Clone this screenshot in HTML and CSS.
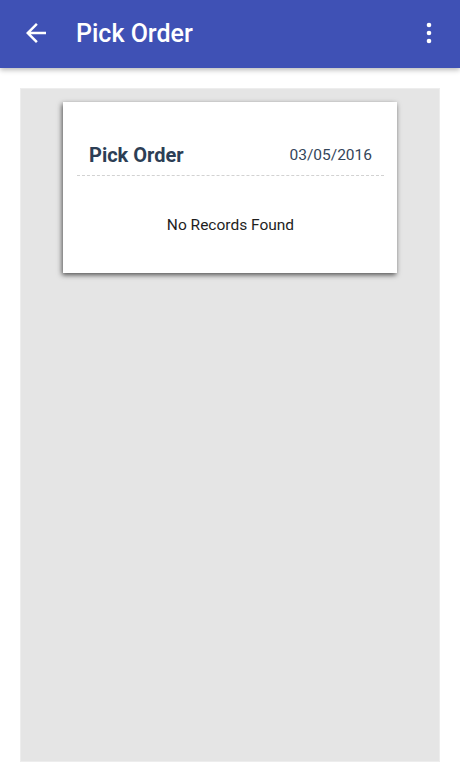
FILE: index.html
```html
<!DOCTYPE html>
<html lang="en">
<head>
<meta charset="utf-8">
<title>Pick Order</title>
<link rel="stylesheet" href="styles.css">
</head>
<body>
<header class="appbar">
  <button class="icon-btn back" aria-label="Back">
    <svg width="30" height="30" viewBox="0 0 24 24"><path fill="#fff" d="M20 11H7.83l5.59-5.59L12 4l-8 8 8 8 1.41-1.41L7.83 13H20v-2z"/></svg>
  </button>
  <h1 class="appbar-title">Pick Order</h1>
  <button class="icon-btn menu" aria-label="More options">
    <svg width="8" height="24" viewBox="0 0 8 24"><circle cx="4" cy="4" r="2.3" fill="#fff"/><circle cx="4" cy="12" r="2.3" fill="#fff"/><circle cx="4" cy="20" r="2.3" fill="#fff"/></svg>
  </button>
</header>
<main class="content">
  <section class="panel">
    <div class="card">
      <div class="card-header">
        <h2 class="card-title">Pick Order</h2>
        <span class="card-date">03/05/2016</span>
      </div>
      <div class="card-body">No Records Found</div>
    </div>
  </section>
</main>
</body>
</html>
```
FILE: styles.css
```css
* { box-sizing: border-box; }
html, body { margin: 0; padding: 0; }
body {
  background: #ffffff;
  font-family: Roboto, "Noto Sans", "Liberation Sans", sans-serif;
  width: 460px;
  height: 778px;
  overflow: hidden;
}
.appbar {
  position: relative;
  z-index: 2;
  height: 68px;
  background: #3f51b5;
  display: flex;
  align-items: center;
  padding: 0 27px 3px 21px;
  box-shadow: 0 2px 5px rgba(0,0,0,0.28);
}
.icon-btn {
  background: none;
  border: 0;
  padding: 0;
  margin: 0;
  display: flex;
  align-items: center;
  justify-content: center;
  cursor: pointer;
}
.back { width: 30px; height: 30px; }
.appbar-title {
  flex: 1;
  margin: 0 0 0 25px;
  padding-top: 2px;
  color: #ffffff;
  font-size: 25px;
  line-height: 28px;
  font-weight: 500;
}
.menu { width: 8px; height: 24px; }
.content {
  padding: 20px 20px 16px;
}
.panel {
  height: 674px;
  background: #e5e5e5;
  border: 1px solid #ededed;
  padding-top: 13px;
}
.card {
  width: 334px;
  margin: 0 auto;
  background: #ffffff;
  padding: 32px 13px 0 14px;
  box-shadow: -1px 2px 5px rgba(0,0,0,0.65);
}
.card-header {
  height: 42px;
  display: flex;
  align-items: center;
  justify-content: space-between;
  padding: 0 12px;
  border-bottom: 1px dashed #d2d2d2;
}
.card-title {
  margin: 0;
  font-size: 20px;
  line-height: 24px;
  font-weight: 700;
  color: #2c3e55;
}
.card-date {
  font-size: 15.5px;
  line-height: 20px;
  color: #34455a;
}
.card-body {
  padding: 39px 0 38px;
  text-align: center;
  font-size: 15.5px;
  line-height: 20px;
  color: #1e1e1e;
}
```
